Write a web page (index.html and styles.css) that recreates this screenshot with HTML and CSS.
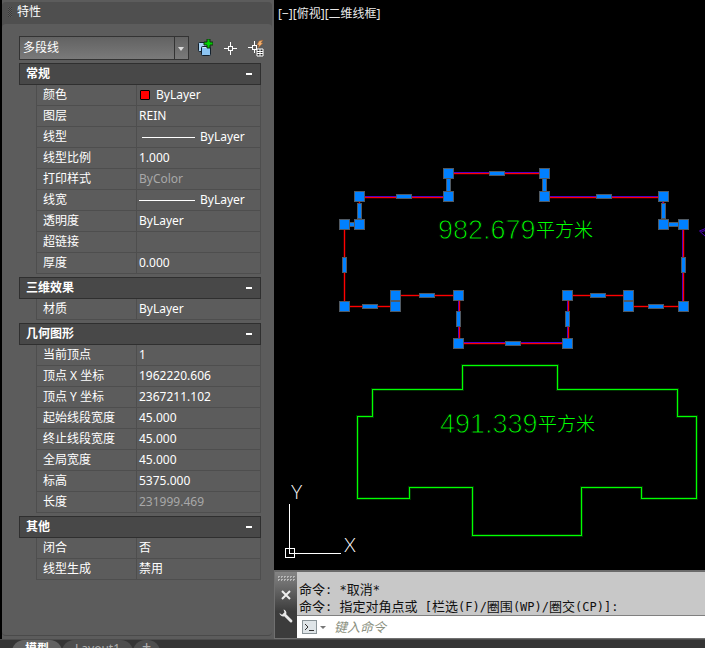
FILE: index.html
```html
<!DOCTYPE html>
<html lang="zh-CN">
<head>
<meta charset="utf-8">
<title>CAD</title>
<link rel="stylesheet" href="styles.css">
</head>
<body>
<main class="workspace">
  <aside class="palette">
    <header class="palette-title">
      <span class="dots"></span>
      <h1>特性</h1>
    </header>
    <div class="palette-body">
      <div class="toolbar">
        <select class="object-type" aria-label="对象类型"><option>多段线</option></select>
        <button class="tool" type="button" aria-label="切换 PICKADD">
          <svg width="16" height="18" viewBox="0 0 16 18"><rect x="1.500" y="3.500" width="9" height="9" rx="1" fill="#a9d4f5" stroke="#14202c"/><rect x="4.500" y="7.500" width="9" height="9" rx="1" fill="#8cc4f2" stroke="#14202c"/><path d="M5.500 8.500h7" stroke="#d5ecff"/><path d="M9 1h3v3h3v3h-3v3H9V7H6V4h3z" transform="translate(1 -1)" fill="#00d000" stroke="#103010"/></svg>
        </button>
        <button class="tool" type="button" aria-label="选择对象">
          <svg width="15" height="15" viewBox="0 0 15 15"><path d="M7.500 1v4M7.500 10v4M1 7.500h4M10 7.500h4" stroke="#fff"/><rect x="5.500" y="5.500" width="4" height="4" fill="none" stroke="#fff"/></svg>
        </button>
        <button class="tool" type="button" aria-label="快速选择">
          <svg width="17" height="18" viewBox="0 0 17 18"><path d="M7.500 2v4M7.500 11v3M1 8.500h4" stroke="#fff"/><rect x="5.500" y="6.500" width="4" height="4" fill="none" stroke="#fff"/><path d="M12 2l4-1-2 3h2l-5 5 1-3h-2z" fill="#f0b070" stroke="#9a5a28" stroke-width=".5"/><path d="M10 10h6v7h-6z" fill="#222" stroke="#fff"/><path d="M10 12.500h6M10 14.500h6M13 10v7" stroke="#fff"/></svg>
        </button>
      </div>

      <section class="group">
        <div class="group-head"><h2>常规</h2><button type="button" aria-label="折叠常规"></button></div>
        <table>
          <tr><th scope="row">颜色</th><td><span class="cell"><i class="swatch"></i>ByLayer</span></td></tr>
          <tr><th scope="row">图层</th><td>REIN</td></tr>
          <tr><th scope="row">线型</th><td><span class="cell"><i class="line type"></i>ByLayer</span></td></tr>
          <tr><th scope="row">线型比例</th><td>1.000</td></tr>
          <tr><th scope="row">打印样式</th><td class="muted">ByColor</td></tr>
          <tr><th scope="row">线宽</th><td><span class="cell"><i class="line"></i>ByLayer</span></td></tr>
          <tr><th scope="row">透明度</th><td>ByLayer</td></tr>
          <tr><th scope="row">超链接</th><td></td></tr>
          <tr><th scope="row">厚度</th><td>0.000</td></tr>
        </table>
      </section>
      <section class="group">
        <div class="group-head"><h2>三维效果</h2><button type="button" aria-label="折叠三维效果"></button></div>
        <table>
          <tr><th scope="row">材质</th><td>ByLayer</td></tr>
        </table>
      </section>
      <section class="group">
        <div class="group-head"><h2>几何图形</h2><button type="button" aria-label="折叠几何图形"></button></div>
        <table>
          <tr><th scope="row">当前顶点</th><td>1</td></tr>
          <tr><th scope="row">顶点 X 坐标</th><td>1962220.606</td></tr>
          <tr><th scope="row">顶点 Y 坐标</th><td>2367211.102</td></tr>
          <tr><th scope="row">起始线段宽度</th><td>45.000</td></tr>
          <tr><th scope="row">终止线段宽度</th><td>45.000</td></tr>
          <tr><th scope="row">全局宽度</th><td>45.000</td></tr>
          <tr><th scope="row">标高</th><td>5375.000</td></tr>
          <tr><th scope="row">长度</th><td class="muted">231999.469</td></tr>
        </table>
      </section>
      <section class="group">
        <div class="group-head"><h2>其他</h2><button type="button" aria-label="折叠其他"></button></div>
        <table>
          <tr><th scope="row">闭合</th><td>否</td></tr>
          <tr><th scope="row">线型生成</th><td>禁用</td></tr>
        </table>
      </section>
    </div>
  </aside>

  <div class="stage">
    <div class="viewport">
      <p class="view-label">[−][俯视][二维线框]</p>
      <svg class="drawing" width="100%" height="100%">
        <defs>
          <rect id="grip" x="-5" y="-5" width="10" height="10" class="grip"/>
          <rect id="midh" x="-7" y="-2" width="15" height="4" class="grip"/>
          <rect id="midv" x="-2" y="-7" width="4" height="15" class="grip"/>
          <path id="outline" d="M448 173H544M359 197H448M544 197H663M359 196V224M663 196V224M683 224V306H628V295H567M568 295V343M567 343H458M459 343V295M458 295H395V306H344V224H359M448 173V196M544 173V196"/>
          <path id="footprint" d="M462 365H557V389H677V416H696V498H641V487H581V535H472V487H409V498H357V416H372V389H462Z"/>
        </defs>
        <g transform="translate(-273.500 .5)" shape-rendering="crispEdges" fill="none">
          <use href="#outline" class="red glow"/>
          <use href="#footprint" class="green glow"/>
          <path class="violet" d="M448 172H544M359 196H448M544 196H663M662 196V224M682 224V306M458 342H567M458 295V343M567 295V343"/>
          <use href="#outline" class="red"/>
          <use href="#footprint" class="green"/>
          <path class="violet" shape-rendering="auto" d="M705 228L699 230.500L705 236M701 231l4-1"/>
          <use href="#midh" x="496" y="173"/><use href="#midh" x="403" y="196"/><use href="#midh" x="603" y="196"/>
          <use href="#midh" x="369" y="306"/><use href="#midh" x="426" y="295"/><use href="#midh" x="597" y="295"/>
          <use href="#midh" x="655" y="306"/><use href="#midh" x="512" y="343"/><use href="#midh" x="673" y="224"/><use href="#midh" x="351" y="224"/>
          <use href="#midv" x="448" y="184"/><use href="#midv" x="544" y="184"/><use href="#midv" x="359" y="210"/><use href="#midv" x="663" y="210"/>
          <use href="#midv" x="344" y="264"/><use href="#midv" x="683" y="264"/><use href="#midv" x="458" y="318"/><use href="#midv" x="567" y="318"/>
          <use href="#grip" x="448" y="173"/><use href="#grip" x="544" y="173"/><use href="#grip" x="544" y="196"/><use href="#grip" x="663" y="196"/>
          <use href="#grip" x="663" y="224"/><use href="#grip" x="683" y="224"/><use href="#grip" x="683" y="306"/><use href="#grip" x="628" y="306"/>
          <use href="#grip" x="628" y="295"/><use href="#grip" x="567" y="295"/><use href="#grip" x="567" y="343"/><use href="#grip" x="458" y="343"/>
          <use href="#grip" x="458" y="295"/><use href="#grip" x="395" y="295"/><use href="#grip" x="395" y="306"/><use href="#grip" x="344" y="306"/>
          <use href="#grip" x="344" y="224"/><use href="#grip" x="359" y="224"/><use href="#grip" x="359" y="196"/><use href="#grip" x="448" y="196"/>
          <path stroke="#fff" d="M289 503V553H340M285 548h9v9h-9z"/>
        </g>
        <g transform="translate(-274 0)">
          <text class="area" x="438" y="239">982.679</text><text class="unit" x="536" y="237">平方米</text>
          <text class="area" x="440" y="433">491.339</text><text class="unit" x="538" y="431">平方米</text>
          <text class="axis" x="291" y="499">Y</text><text class="axis" x="344" y="552">X</text>
        </g>
      </svg>
    </div>

    <section class="command">
      <div class="command-side">
        <span class="dots wide"></span>
        <button type="button" aria-label="关闭"><svg width="12" height="10" viewBox="0 0 12 10"><path d="M2 1l8 8M10 1L2 9" stroke="#eee" stroke-width="2"/></svg></button>
        <button type="button" aria-label="自定义"><svg width="16" height="16" viewBox="0 0 16 16"><path d="M5.500 1.500A3.500 3.500 0 0 1 8.200 6.200L14 12a1.300 1.300 0 0 1-2 2L6.200 8.200A3.600 3.600 0 0 1 1.500 5L4 6.800 6.500 4.200z" fill="#e8e8e8"/></svg></button>
      </div>
      <div class="command-main">
        <div class="history">
          <p>命令<span class="code">: *</span>取消<span class="code">*</span></p>
          <p>命令<span class="code">: </span>指定对角点或<span class="code"> [</span>栏选<span class="code">(F)/</span>圈围<span class="code">(WP)/</span>圈交<span class="code">(CP)]:</span></p>
        </div>
        <div class="prompt">
          <button type="button" aria-label="最近的命令"><svg width="24" height="14" viewBox="0 0 24 14"><rect x=".5" y=".5" width="14" height="13" fill="#dfe5e8" stroke="#8b9599"/><path d="M3 4l3 3-3 3M7 10.500h5" fill="none" stroke="#333"/><path d="M18 6h6l-3 3z" fill="#777"/></svg></button>
          <input type="text" aria-label="命令" placeholder="键入命令">
        </div>
      </div>
    </section>
  </div>
</main>
<nav class="tabs">
  <a class="tab active" href="#model">模型</a>
  <a class="tab" href="#layout1">Layout1</a>
  <a class="tab add" href="#new">+</a>
</nav>
</body>
</html>
```
FILE: styles.css
```css
* { box-sizing: border-box; }
body {
  margin: 0;
  height: 100vh;
  overflow: hidden;
  background: #353535;
  color: #fff;
  font: 12px/16px "Noto Sans", "Noto Sans CJK SC", sans-serif;
}
h1, h2, p { margin: 0; font-size: 12px; font-weight: 400; }
button { padding: 0; border: 0; background: none; display: flex; align-items: center; justify-content: center; }
svg { display: block; }

.workspace { display: flex; height: calc(100vh - 9px); }

.palette {
  flex: none;
  width: 274px;
  display: flex;
  flex-direction: column;
  padding: 2px 2px 0 0;
  border-left: 2px solid #000;
  background: #5c5c5c;
}
.palette-title {
  display: flex;
  align-items: center;
  gap: 5px;
  height: 30px;
  padding: 0 6px 10px;
  border-radius: 4px 4px 0 0;
  background: #4f4f4f;
}
.dots {
  width: 4px;
  height: 10px;
  background: repeating-conic-gradient(#3a3a3a 0 25%, #5c5c5c 0 50%) 0 0 / 2px 2px;
}
.palette-body {
  flex: 1;
  margin: -8px 0 3px;
  padding: 12px 11px 0 17px;
  border-radius: 4px;
  border-bottom: 1px solid #4a4a4a;
  background: #5c5c5c;
}

.toolbar { position: relative; display: flex; align-items: center; gap: 7px; height: 24px; margin-bottom: 3px; }
.object-type {
  appearance: none;
  flex: none;
  width: 170px;
  height: 24px;
  padding: 0 3px;
  border: 1px solid #333;
  border-radius: 0;
  color: #fff;
  font: inherit;
  background:
    linear-gradient(#333, #333) right 13px top 0 / 1px 100% no-repeat,
    linear-gradient(#626262, #7a7a7a);
}
.toolbar::before {
  content: "";
  position: absolute;
  left: 159px;
  top: 11px;
  border: 3px solid transparent;
  border-top: 4px solid #ddd;
  border-bottom: 0;
  pointer-events: none;
}
.tool { flex: none; width: 18px; height: 20px; }

.group { margin-bottom: 3px; }
.group-head {
  display: flex;
  align-items: center;
  justify-content: space-between;
  height: 22px;
  padding: 0 7px 0 6px;
  border: 1px solid #2f2f2f;
  background: #484848;
}
.group-head h2 { font-weight: 700; }
.group-head button { width: 8px; height: 12px; }
.group-head button::before { content: ""; width: 6px; height: 2px; background: #fff; }
table {
  width: calc(100% - 17px);
  margin-left: 17px;
  border-collapse: separate;
  border-spacing: 0;
  table-layout: fixed;
  border-left: 1px solid #4e4e4e;
}
th, td {
  height: 21px;
  padding: 0 0 0 2px;
  border-right: 1px solid #4e4e4e;
  border-bottom: 1px solid #4e4e4e;
  font-weight: 400;
  text-align: left;
  white-space: nowrap;
}
th { width: 100px; padding-left: 6px; }
.muted { color: #a8a8a8; }
.cell { display: flex; align-items: center; gap: 5px; }
.swatch { width: 10px; height: 10px; margin: 0 1px; border: 1px solid #000; border-radius: 1px; background: #f00; }
.line { width: 56px; height: 1px; background: #fff; }
.line.type { width: 53px; margin-left: 3px; }

.stage { flex: 1; min-width: 0; display: flex; flex-direction: column; background: #5c5c5c; }
.viewport { position: relative; flex: 1; min-height: 0; background: #000; overflow: hidden; }
.view-label { position: absolute; left: 4px; top: 6px; color: #e8e8e8; }
.drawing { width: 100%; height: 100%; }
.red { stroke: #f00; }
.violet { stroke: #5000c0; }
.green { stroke: #0f0; }
.glow { stroke-width: 3px; stroke-opacity: .2; }
.grip { fill: #0080ff; stroke: #505a64; }
.area { fill: #0f0; stroke: #000; stroke-width: 1px; font: 27px "Liberation Sans", sans-serif; }
.unit { fill: #0f0; font: 300 19px "Noto Sans CJK SC", sans-serif; }
.axis { fill: #fff; font: 300 19px Lato, sans-serif; }

.command { display: flex; height: 69px; border: 1px solid #707070; border-top: 2px solid #6a6a6a; border-right: 0; }
.command-side {
  width: 22px;
  display: flex;
  flex-direction: column;
  align-items: center;
  gap: 5px;
  padding-top: 4px;
  background: linear-gradient(#858585, #3c3c3c 60%);
}
.command-side button { height: 16px; }
.dots.wide { width: 18px; height: 6px; background: conic-gradient(#b8b8b8 90deg, transparent 0) 0 0 / 3px 3px; }
.command-main { flex: 1; min-width: 0; display: flex; flex-direction: column; }
.history {
  flex: 1;
  display: flex;
  flex-direction: column;
  justify-content: flex-end;
  padding-left: 2px;
  background: #c8c8c8;
  color: #101010;
}
.history p { font: 13px/15px "Noto Sans CJK SC", sans-serif; white-space: pre; }
.code { font: 12px/15px "DejaVu Sans Mono", monospace; }
.prompt { display: flex; align-items: center; gap: 8px; height: 23px; padding-left: 5px; border-top: 1px solid #808080; background: #fff; }
.prompt input { flex: 1; min-width: 0; border: 0; padding: 0; outline: 0; background: none; font: italic 13px/16px "Noto Sans CJK SC", sans-serif; }
.prompt input::placeholder { color: #8a9080; opacity: 1; }

.tabs { display: flex; height: 24px; padding-left: 12px; border-top: 1px solid #4c4c4c; }
.tab {
  padding: 0 13px;
  border-radius: 12px 12px 0 0;
  background: #4e4e4e;
  color: #b0b0b0;
  line-height: 18px;
  text-decoration: none;
}
.tab.active { background: #626262; color: #fff; font-weight: 700; }
.tab.add { padding: 0 9px; font-size: 16px; line-height: 14px; }
```
